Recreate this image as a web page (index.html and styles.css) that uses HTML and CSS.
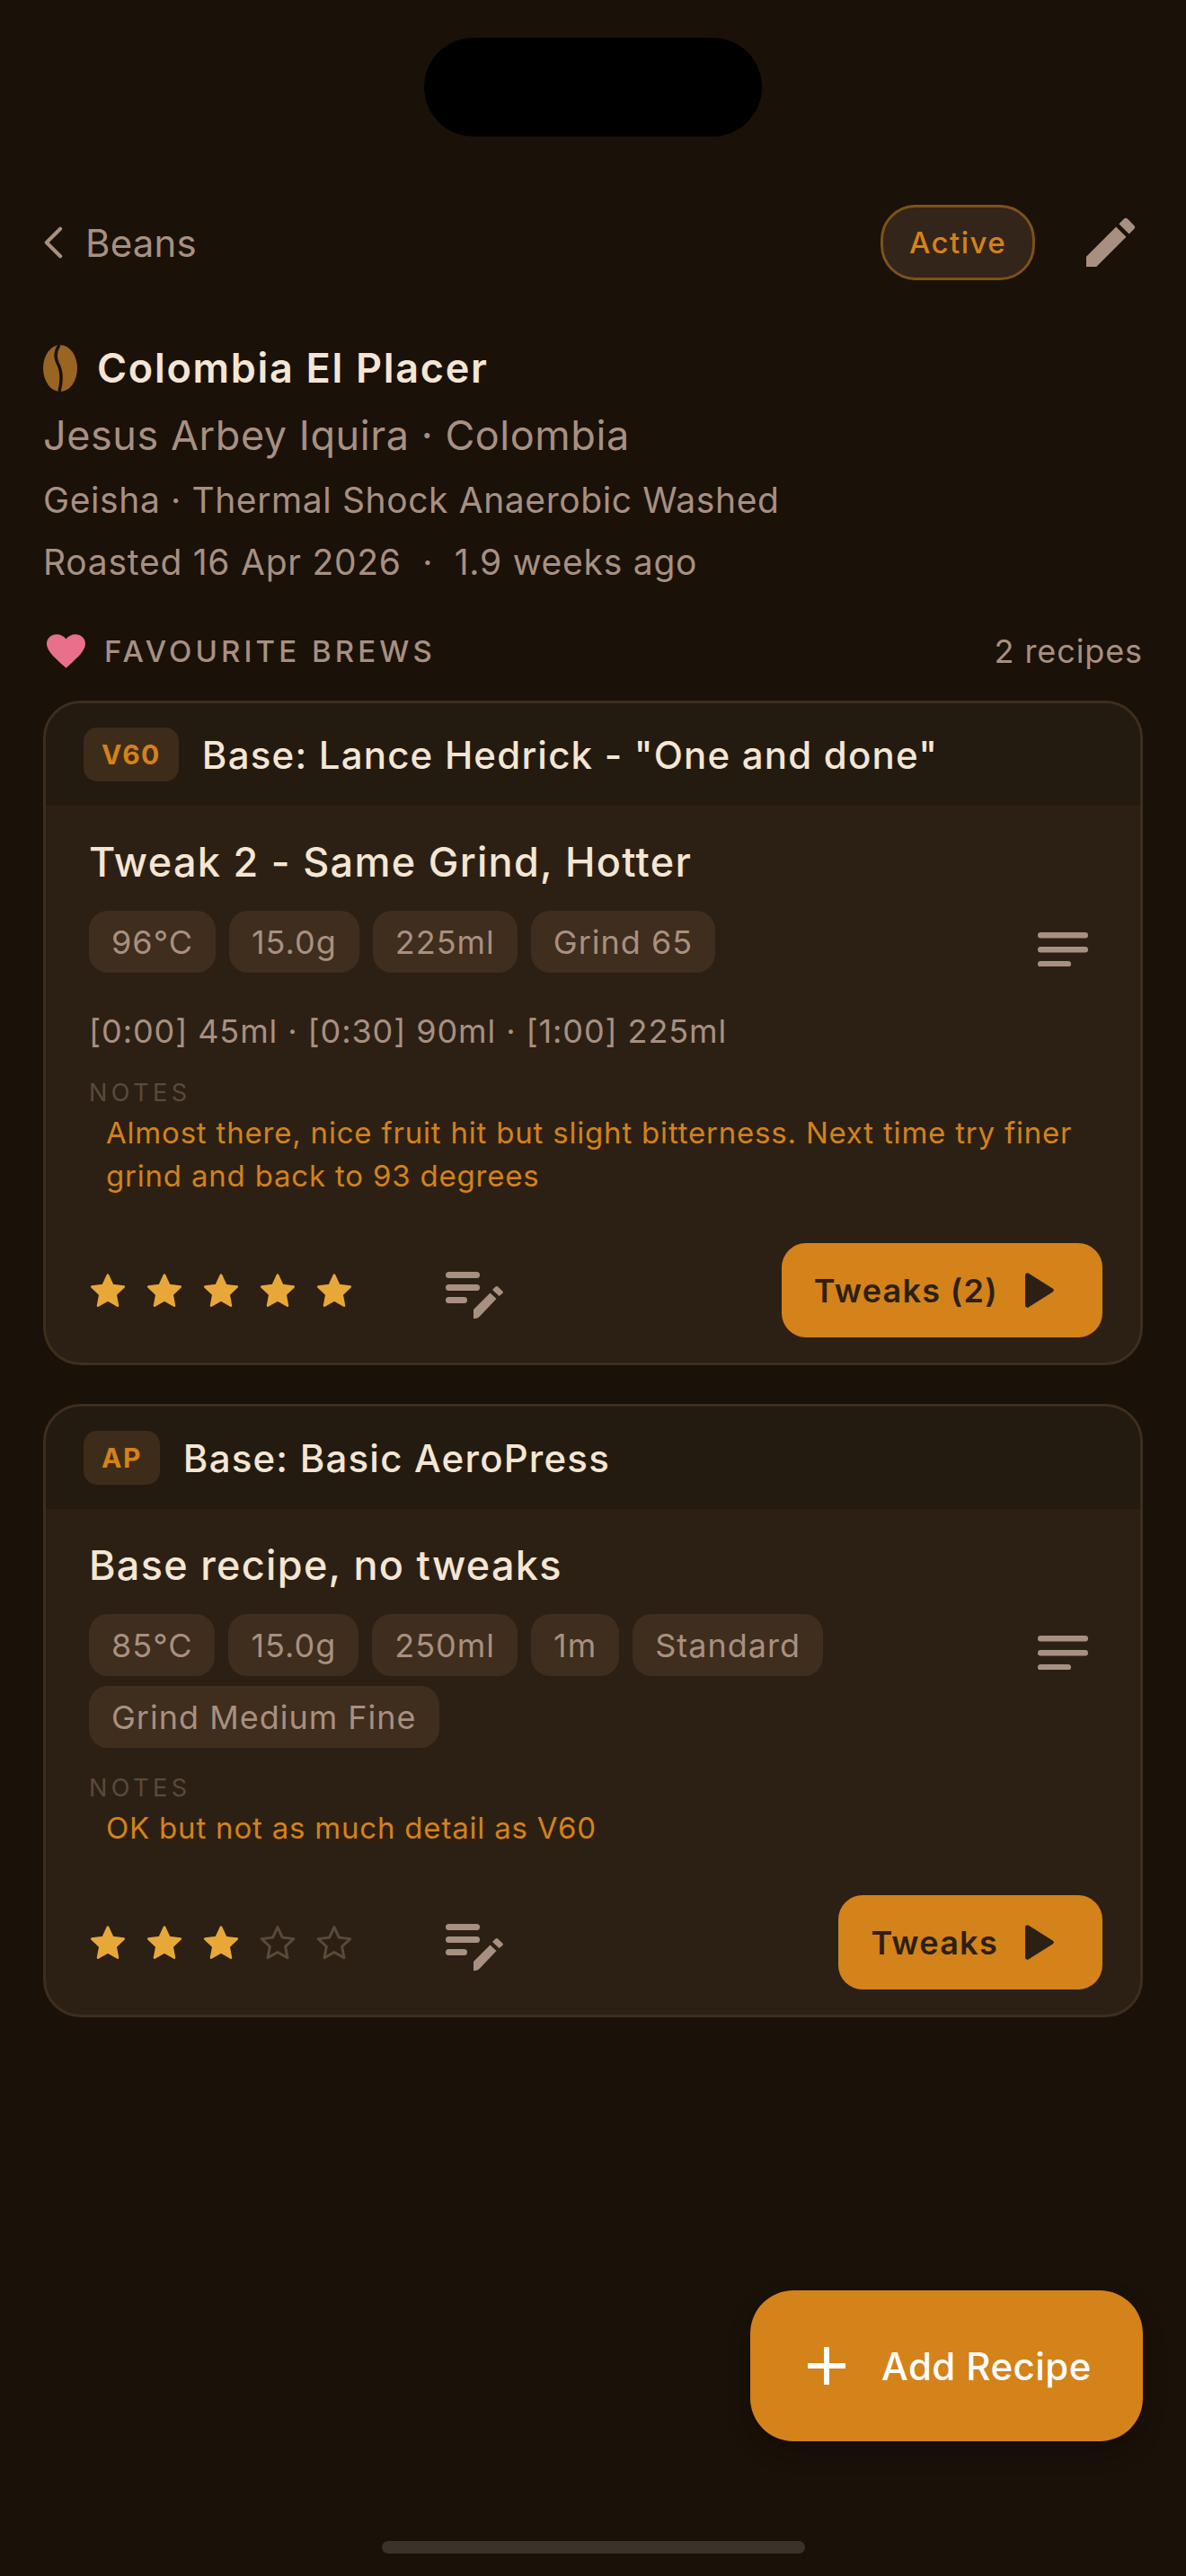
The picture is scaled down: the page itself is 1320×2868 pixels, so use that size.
FILE: index.html
```html
<!DOCTYPE html>
<html lang="en">
<head>
<meta charset="utf-8">
<title>Colombia El Placer</title>
<link rel="stylesheet" href="styles.css">
</head>
<body>
<main class="screen">
  <div class="island"></div>

  <header class="topbar">
    <div class="back">
      <svg class="back-icon" viewBox="0 0 24 40"><path d="M21 3 4 20l17 17" fill="none" stroke="currentColor" stroke-width="4.500" stroke-linecap="round" stroke-linejoin="round"/></svg>
      <span>Beans</span>
    </div>
    <div class="top-actions">
      <span class="status">Active</span>
      <svg class="edit-icon" viewBox="0 0 24 24"><path fill="currentColor" d="M3 17.25V21h3.75L17.81 9.94l-3.75-3.75L3 17.25zM20.71 7.04a1 1 0 0 0 0-1.41l-2.34-2.34a1 1 0 0 0-1.41 0l-1.83 1.83 3.75 3.75 1.83-1.83z"/></svg>
    </div>
  </header>

  <section class="bean">
    <div class="bean-title">
      <svg class="bean-icon" viewBox="0 0 38 52"><ellipse cx="19" cy="26" rx="19" ry="26" fill="#9a6423"/><path d="M18 0C13 8 13 14 16 20c4 7 6 16 2 32" fill="none" stroke="#1a1109" stroke-width="3.500"/></svg>
      <h1>Colombia El Placer</h1>
    </div>
    <p class="roaster">Jesus Arbey Iquira · Colombia</p>
    <p class="variety">Geisha · Thermal Shock Anaerobic Washed</p>
    <p class="roasted">Roasted 16 Apr 2026 &nbsp;·&nbsp; 1.9 weeks ago</p>
  </section>

  <div class="section-head">
    <div class="section-title">
      <svg class="heart" viewBox="0 0 24 21"><path fill="#e8708a" d="M12 21l-1.700-1.600C4.200 13.900 0 10.100 0 5.900 0 2.500 2.700 0 6.200 0 8.500 0 10.700 1.100 12 2.900 13.300 1.100 15.500 0 17.800 0 21.300 0 24 2.500 24 5.900c0 4.200-4.200 8-10.300 13.500z"/></svg>
      <span>FAVOURITE BREWS</span>
    </div>
    <span class="count">2 recipes</span>
  </div>

  <article class="card">
    <div class="card-head">
      <span class="method">V60</span>
      <span class="base">Base: Lance Hedrick - "One and done"</span>
    </div>
    <div class="card-body">
      <h2>Tweak 2 - Same Grind, Hotter</h2>
      <div class="chip-row">
        <div class="chips">
          <span class="chip">96°C</span><span class="chip">15.0g</span><span class="chip">225ml</span><span class="chip">Grind 65</span>
        </div>
        <svg class="lines" viewBox="0 0 56 38"><g fill="currentColor"><rect width="56" height="6.500" rx="3.250"/><rect y="16" width="56" height="6.500" rx="3.250"/><rect y="32" width="37" height="6.500" rx="3.250"/></g></svg>
      </div>
      <p class="pours">[0:00] 45ml · [0:30] 90ml · [1:00] 225ml</p>
      <p class="notes-label">NOTES</p>
      <p class="notes">Almost there, nice fruit hit but slight bitterness. Next time try finer grind and back to 93 degrees</p>
      <div class="card-foot">
        <div class="stars">
          <svg class="star" viewBox="0 0 24 24"><path d="M12 2.500l2.900 6.300 6.800.8-5 4.700 1.300 6.800-6-3.400-6 3.400 1.300-6.800-5-4.700 6.800-.8z"/></svg>
          <svg class="star" viewBox="0 0 24 24"><path d="M12 2.500l2.900 6.300 6.800.8-5 4.700 1.300 6.800-6-3.400-6 3.400 1.300-6.800-5-4.700 6.800-.8z"/></svg>
          <svg class="star" viewBox="0 0 24 24"><path d="M12 2.500l2.900 6.300 6.800.8-5 4.700 1.300 6.800-6-3.400-6 3.400 1.300-6.800-5-4.700 6.800-.8z"/></svg>
          <svg class="star" viewBox="0 0 24 24"><path d="M12 2.500l2.900 6.300 6.800.8-5 4.700 1.300 6.800-6-3.400-6 3.400 1.300-6.800-5-4.700 6.800-.8z"/></svg>
          <svg class="star" viewBox="0 0 24 24"><path d="M12 2.500l2.900 6.300 6.800.8-5 4.700 1.300 6.800-6-3.400-6 3.400 1.300-6.800-5-4.700 6.800-.8z"/></svg>
        </div>
        <svg class="note-edit" viewBox="0 0 64 52"><g fill="currentColor"><rect width="38" height="7" rx="3.500"/><rect y="14" width="38" height="7" rx="3.500"/><rect y="28" width="24" height="7" rx="3.500"/><path d="M31 42 49.500 23.500l7 6.500L38 49.500c-2 2-3.500 2.500-7 2.500z"/><path d="M52 20l3.500-3.500c.8-.8 1.800-.8 2.600 0l5.200 5c.8.8.8 1.800 0 2.600L59.500 27z"/></g></svg>
        <button class="tweaks">
          <span>Tweaks (2)</span>
          <svg class="play" viewBox="0 0 32 39"><path fill="currentColor" d="M0 3C0 .5 2 -.5 4 .7L30.500 17.500c1.800 1 1.800 3 0 4L4 38.300c-2 1.200-4 .2-4-2.300z"/></svg>
        </button>
      </div>
    </div>
  </article>

  <article class="card">
    <div class="card-head">
      <span class="method">AP</span>
      <span class="base">Base: Basic AeroPress</span>
    </div>
    <div class="card-body">
      <h2>Base recipe, no tweaks</h2>
      <div class="chip-row">
        <div class="chips">
          <span class="chip">85°C</span><span class="chip">15.0g</span><span class="chip">250ml</span><span class="chip">1m</span><span class="chip">Standard</span><span class="chip">Grind Medium Fine</span>
        </div>
        <svg class="lines" viewBox="0 0 56 38"><g fill="currentColor"><rect width="56" height="6.500" rx="3.250"/><rect y="16" width="56" height="6.500" rx="3.250"/><rect y="32" width="37" height="6.500" rx="3.250"/></g></svg>
      </div>
      <p class="notes-label">NOTES</p>
      <p class="notes">OK but not as much detail as V60</p>
      <div class="card-foot">
        <div class="stars">
          <svg class="star" viewBox="0 0 24 24"><path d="M12 2.500l2.900 6.300 6.800.8-5 4.700 1.300 6.800-6-3.400-6 3.400 1.300-6.800-5-4.700 6.800-.8z"/></svg>
          <svg class="star" viewBox="0 0 24 24"><path d="M12 2.500l2.900 6.300 6.800.8-5 4.700 1.300 6.800-6-3.400-6 3.400 1.300-6.800-5-4.700 6.800-.8z"/></svg>
          <svg class="star" viewBox="0 0 24 24"><path d="M12 2.500l2.900 6.300 6.800.8-5 4.700 1.300 6.800-6-3.400-6 3.400 1.300-6.800-5-4.700 6.800-.8z"/></svg>
          <svg class="star star-empty" viewBox="0 0 24 24"><path d="M12 2.500l2.900 6.300 6.800.8-5 4.700 1.300 6.800-6-3.400-6 3.400 1.300-6.800-5-4.700 6.800-.8z"/></svg>
          <svg class="star star-empty" viewBox="0 0 24 24"><path d="M12 2.500l2.900 6.300 6.800.8-5 4.700 1.300 6.800-6-3.400-6 3.400 1.300-6.800-5-4.700 6.800-.8z"/></svg>
        </div>
        <svg class="note-edit" viewBox="0 0 64 52"><g fill="currentColor"><rect width="38" height="7" rx="3.500"/><rect y="14" width="38" height="7" rx="3.500"/><rect y="28" width="24" height="7" rx="3.500"/><path d="M31 42 49.500 23.500l7 6.500L38 49.500c-2 2-3.500 2.500-7 2.500z"/><path d="M52 20l3.500-3.500c.8-.8 1.800-.8 2.600 0l5.200 5c.8.8.8 1.800 0 2.600L59.500 27z"/></g></svg>
        <button class="tweaks">
          <span>Tweaks</span>
          <svg class="play" viewBox="0 0 32 39"><path fill="currentColor" d="M0 3C0 .5 2 -.5 4 .7L30.500 17.500c1.800 1 1.800 3 0 4L4 38.300c-2 1.200-4 .2-4-2.300z"/></svg>
        </button>
      </div>
    </div>
  </article>

  <button class="fab">
    <svg class="plus" viewBox="0 0 42 42"><path d="M21 0v42M0 21h42" fill="none" stroke="currentColor" stroke-width="6"/></svg>
    <span>Add Recipe</span>
  </button>
  <div class="home-bar"></div>
</main>
</body>
</html>
```

FILE: styles.css
```css
* { box-sizing: border-box; }
html, body { margin: 0; padding: 0; }
body {
  background: #1a1109;
  font-family: Inter, "Liberation Sans", sans-serif;
  color: #f5e6d3;
}
p, h1, h2 { margin: 0; font-weight: inherit; }
button { font-family: inherit; border: 0; }
svg { display: block; flex: none; }

.screen {
  position: relative;
  width: 1320px;
  height: 2868px;
  padding: 228px 48px 0;
  overflow: hidden;
}
.island {
  position: absolute;
  top: 42px;
  left: 472px;
  width: 376px;
  height: 110px;
  border-radius: 55px;
  background: #000;
}

.topbar {
  display: flex;
  justify-content: space-between;
  align-items: center;
  height: 84px;
}
.back {
  display: flex;
  align-items: center;
  gap: 25px;
  color: #a89080;
  font-size: 42px;
  letter-spacing: 0.2px;
}
.back-icon { width: 22px; height: 36px; }
.top-actions { display: flex; align-items: center; gap: 48px; }
.status {
  display: flex;
  align-items: center;
  justify-content: center;
  width: 172px;
  height: 84px;
  border: 3px solid #7d5219;
  border-radius: 39px;
  background: #33251a;
  color: #d4821a;
  font-size: 33px;
  font-weight: 500;
  letter-spacing: 1.4px;
}
.edit-icon { width: 72px; height: 72px; color: #a89080; }

.bean { margin-top: 68px; }
.bean-title { display: flex; align-items: center; gap: 22px; height: 60px; }
.bean-icon { width: 38px; height: 52px; }
h1 { font-size: 45px; font-weight: 600; line-height: 60px; letter-spacing: 1.7px; color: #f5e6d3; }
.roaster { margin-top: 15px; font-size: 45px; line-height: 60px; color: #a89080; letter-spacing: 0.55px; }
.variety { margin-top: 18px; font-size: 39px; line-height: 48px; color: #a89080; letter-spacing: 0.6px; }
.roasted { margin-top: 21px; font-size: 39px; line-height: 48px; color: #a89080; letter-spacing: 0.75px; }

.section-head {
  display: flex;
  justify-content: space-between;
  align-items: center;
  margin-top: 51px;
  height: 48px;
}
.section-title {
  display: flex;
  align-items: center;
  gap: 21px;
  color: #a89080;
  font-size: 33px;
  font-weight: 500;
  letter-spacing: 4.1px;
}
.heart { width: 43px; height: 38px; margin-left: 4px; }
.count { color: #a89080; font-size: 36px; letter-spacing: 0.9px; }

.card {
  margin-top: 31px;
  border: 3px solid #3d2e1e;
  border-radius: 42px;
  background: #2c2015;
  overflow: hidden;
}
.card + .card { margin-top: 43px; }
.card-head {
  display: flex;
  align-items: center;
  gap: 26px;
  height: 114px;
  padding: 0 42px;
  background: #231a10;
}
.method {
  display: flex;
  align-items: center;
  justify-content: center;
  height: 60px;
  padding: 0 20px;
  border-radius: 15px;
  background: #3d2c1a;
  color: #d4821a;
  font-size: 30px;
  font-weight: 700;
  letter-spacing: 1.5px;
}
.base { font-size: 42px; font-weight: 500; letter-spacing: 1.2px; color: #f5e6d3; }

.card-body { padding: 33px 42px 28px 48px; }
h2 { font-size: 45px; font-weight: 500; line-height: 60px; letter-spacing: 1.3px; color: #f5e6d3; }
.chip-row { display: flex; justify-content: space-between; align-items: flex-start; margin-top: 24px; }
.chips { display: flex; flex-wrap: wrap; gap: 11px 15px; width: 900px; }
.chip {
  display: flex;
  align-items: center;
  height: 69px;
  padding: 0 25px;
  border-radius: 21px;
  background: #3f2d1e;
  color: #a89080;
  font-size: 36px;
  letter-spacing: 1px;
}
.lines { width: 56px; height: 38px; margin: 24px 16px 0 0; color: #a89080; }
.pours { margin-top: 41px; font-size: 36px; line-height: 48px; color: #a89080; letter-spacing: 0.9px; }
.notes-label { margin-top: 27px; font-size: 27px; line-height: 36px; color: #5a4a3a; letter-spacing: 4.5px; }
.notes { margin-top: 2px; padding-left: 19px; font-size: 33px; line-height: 48px; color: #d4821a; letter-spacing: 0.8px; }

.card-foot { display: flex; align-items: flex-start; margin-top: 51px; }
.stars { display: flex; gap: 19px; margin: 31px 0 0 -1px; width: 398px; }
.star { width: 44px; height: 44px; }
.star path { fill: #e8a838; stroke: #e8a838; stroke-width: 1.4; stroke-linejoin: round; }
.star-empty path { fill: none; stroke: #5a4a3a; stroke-width: 1.6; }
.note-edit { width: 64px; height: 52px; margin-top: 32px; color: #a89080; }
.tweaks {
  display: flex;
  align-items: center;
  gap: 30px;
  height: 105px;
  margin-left: auto;
  padding: 0 54px 0 36px;
  border-radius: 27px;
  background: #d4821a;
  color: #2c2015;
  font-size: 36px;
  font-weight: 600;
  letter-spacing: 1.3px;
}
.play { width: 32px; height: 39px; }

.fab {
  position: absolute;
  left: 835px;
  top: 2550px;
  display: flex;
  align-items: center;
  gap: 40px;
  width: 437px;
  height: 168px;
  padding: 0 0 0 64px;
  border-radius: 48px;
  background: #d4821a;
  color: #fff;
  font-size: 42px;
  font-weight: 500;
  letter-spacing: 0.45px;
  box-shadow: 0 12px 24px rgba(0, 0, 0, 0.25);
}
.plus { width: 42px; height: 42px; }
.home-bar {
  position: absolute;
  left: 425px;
  top: 2829px;
  width: 471px;
  height: 14px;
  border-radius: 7px;
  background: #3b322c;
}
```
